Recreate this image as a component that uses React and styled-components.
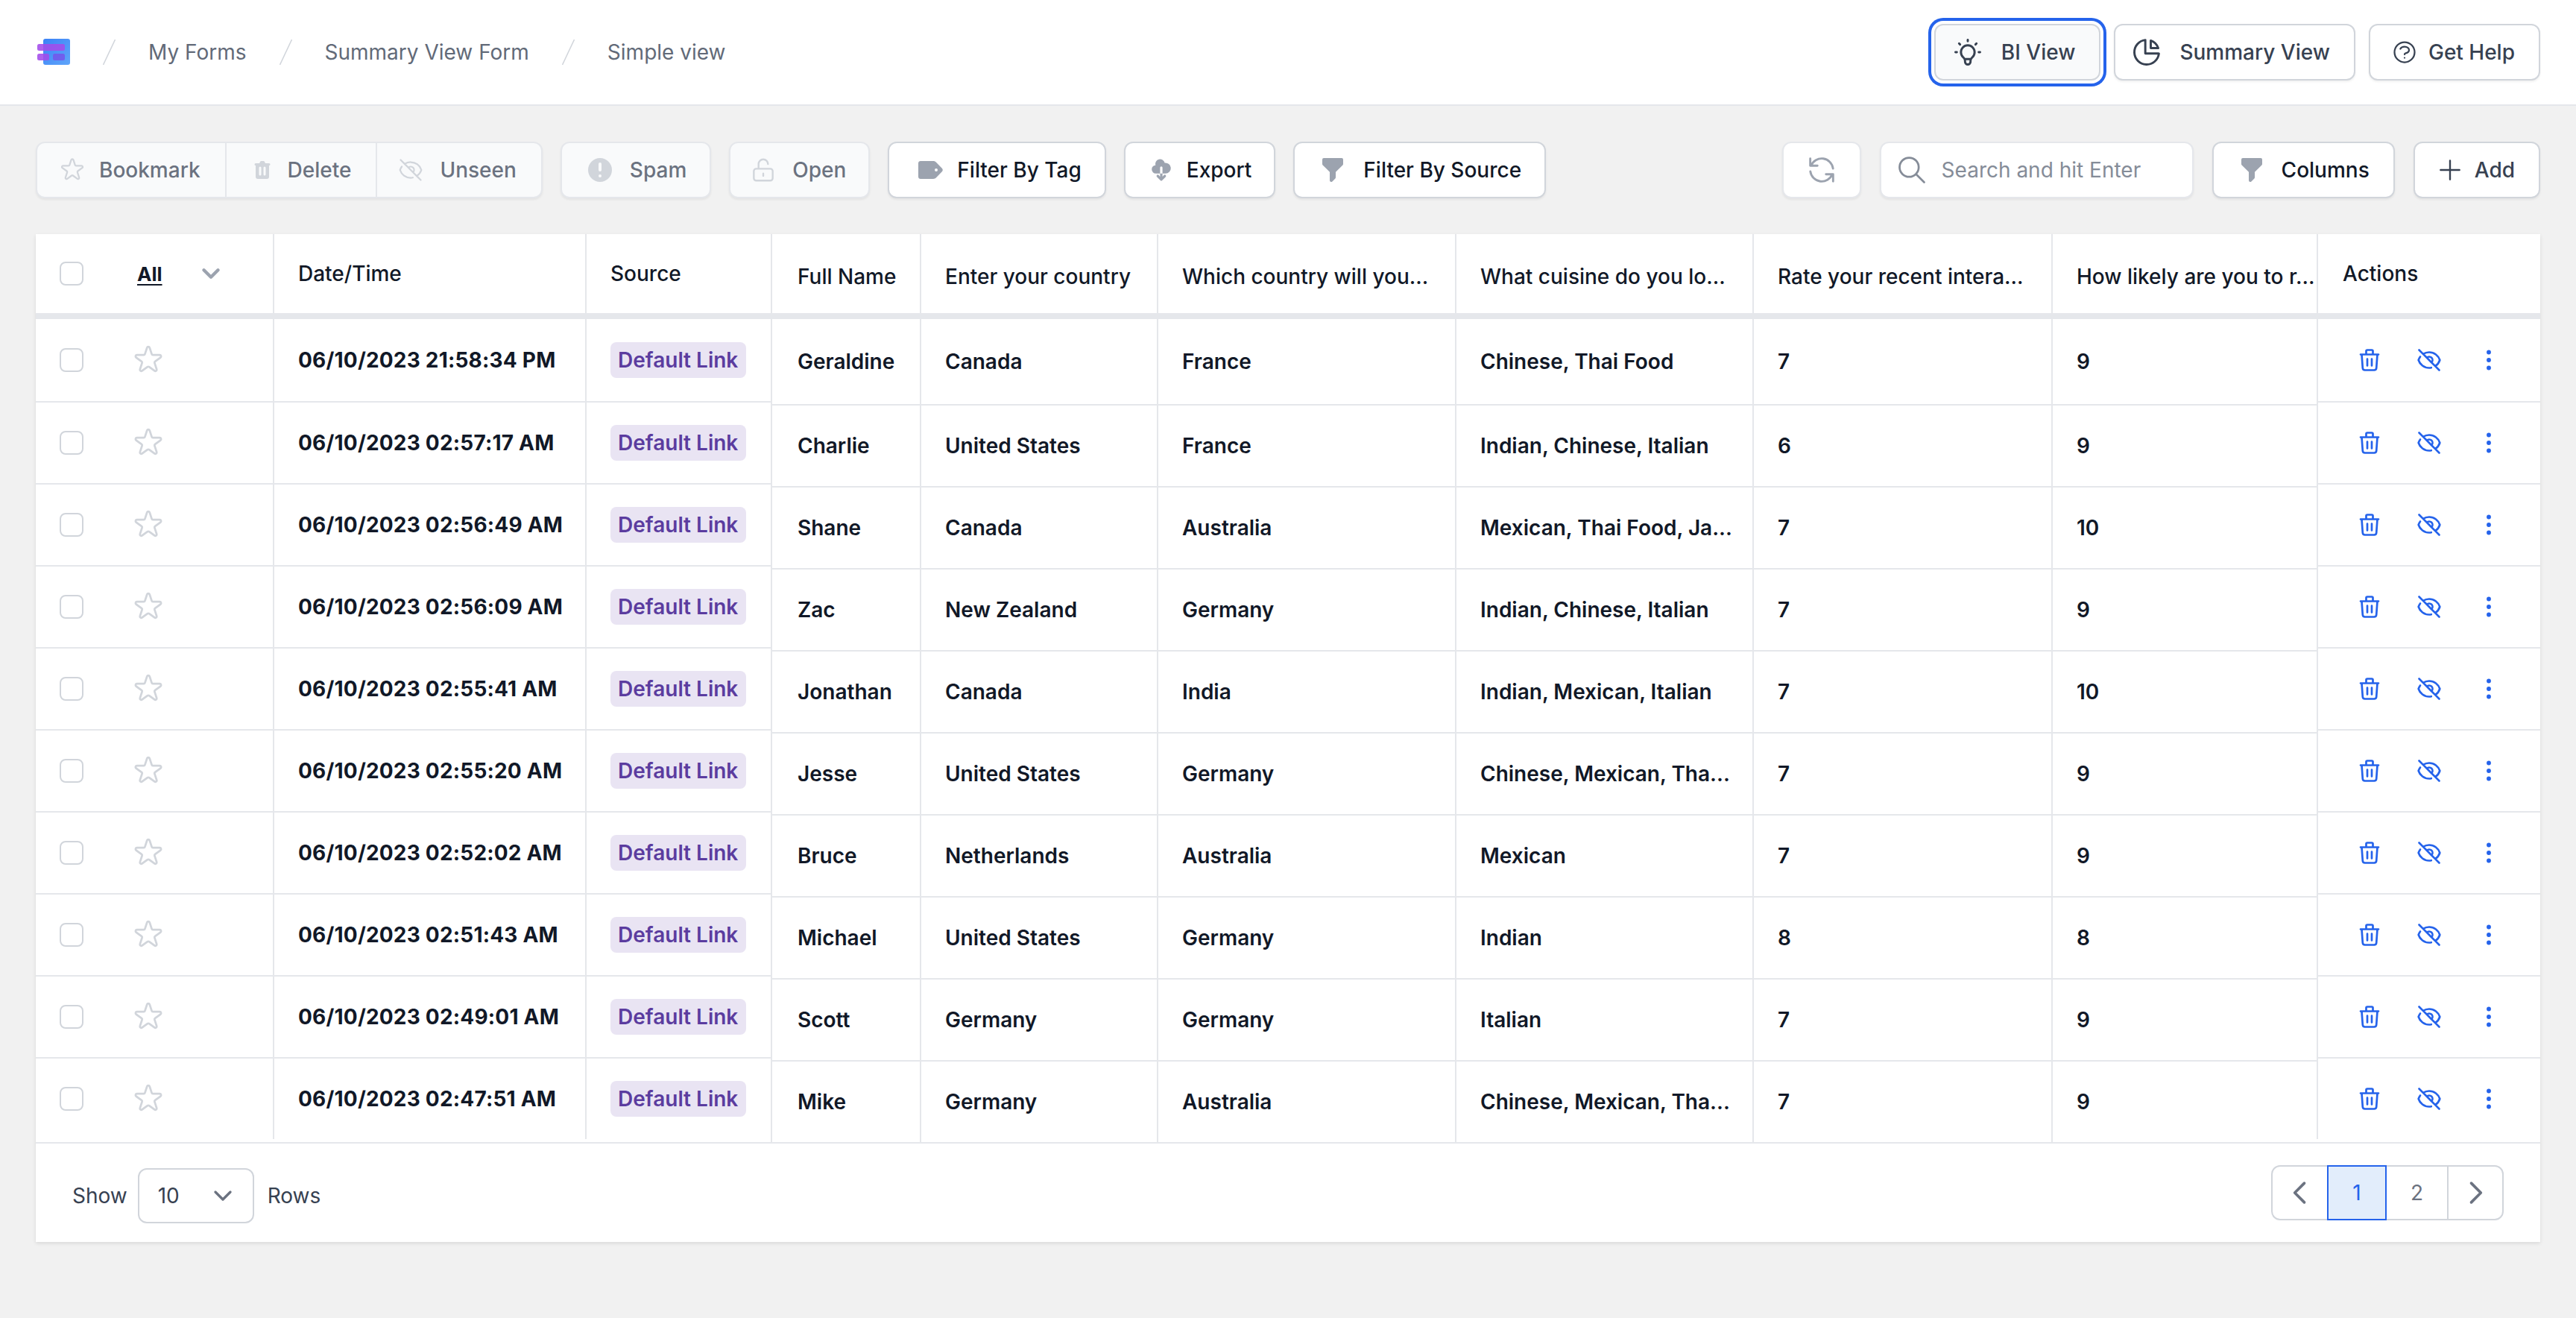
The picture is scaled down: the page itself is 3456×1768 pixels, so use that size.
import React from "react";
import styled, { createGlobalStyle } from "styled-components";
import {
  HiOutlineStar, HiTrash, HiOutlineEyeOff, HiExclamationCircle, HiOutlineLockOpen,
  HiCloudDownload, HiFilter, HiOutlineRefresh, HiOutlineSearch, HiOutlinePlus,
  HiOutlineLightBulb, HiOutlineChartPie, HiOutlineQuestionMarkCircle, HiOutlineTrash,
  HiOutlineDotsVertical, HiOutlineChevronLeft, HiOutlineChevronRight,
} from "react-icons/hi";
import { ChevronDown } from "lucide-react";

const Global = createGlobalStyle`
  html, body { margin: 0; padding: 0; background: #f1f1f1; }
  body { font-family: Inter, "Liberation Sans", sans-serif; min-height: 1768px; color: #111827; }
  * { box-sizing: border-box; }
`;

const thin = (Icon, w = 1.5) => styled(Icon)`
  flex: none;
  & path { stroke-width: ${w}; }
`;
const Star = thin(HiOutlineStar);
const EyeOff = thin(HiOutlineEyeOff);
const RowEyeOff = thin(HiOutlineEyeOff, 1.8);
const LockOpen = thin(HiOutlineLockOpen);
const Refresh = thin(HiOutlineRefresh, 1.5);
const Search = thin(HiOutlineSearch, 1.5);
const Plus = thin(HiOutlinePlus, 1.5);
const Bulb = thin(HiOutlineLightBulb, 1.6);
const Pie = thin(HiOutlineChartPie, 1.6);
const Question = thin(HiOutlineQuestionMarkCircle, 1.5);
const OutTrash = thin(HiOutlineTrash, 1.8);
const DotsV = thin(HiOutlineDotsVertical, 1.9);

const Header = styled.header`
  height: 142px;
  background: #fff;
  border-bottom: 2px solid #e5e7eb;
  display: flex;
  align-items: center;
  justify-content: space-between;
  padding: 0 48px 0 50px;
`;
const Crumbs = styled.nav`
  display: flex;
  align-items: center;
  gap: 44px;
  font-size: 28px;
  color: #626a78;
  font-weight: 400;
`;
const Group = styled.div`
  display: flex;
  align-items: center;
  gap: ${(p) => p.$gap || 25}px;
`;
const Button = styled.button`
  height: 76px;
  display: flex;
  align-items: center;
  gap: ${(p) => p.$gap}px;
  padding: 0 ${(p) => p.$pr ?? 32}px 0 ${(p) => p.$pl}px;
  font: 500 28px Inter, sans-serif;
  white-space: nowrap;
  border-radius: 12px;
  border: 2px solid ${(p) => (p.$muted ? "#e5e7eb" : "#d1d5db")};
  background: ${(p) => (p.$muted || p.$active ? "#f9fafb" : "#fff")};
  color: ${(p) => (p.$muted ? "#6b7280" : p.$tone || "#111827")};
  box-shadow: ${(p) =>
    p.$active
      ? "0 0 0 4px #fff, 0 0 0 8px #2563eb"
      : "0 2px 3px rgba(0,0,0,.06)"};
`;
const IconTint = styled.span`
  display: flex;
  color: ${(p) => p.$c};
`;
const Toolbar = styled.div`
  margin-top: 48px;
  padding: 0 48px;
  display: flex;
  justify-content: space-between;
  align-items: center;
`;
const Segmented = styled.div`
  display: flex;
  height: 76px;
  border: 2px solid #e5e7eb;
  border-radius: 12px;
  background: #f9fafb;
  box-shadow: 0 2px 3px rgba(0,0,0,.06);
`;
const Segment = styled.div`
  display: flex;
  align-items: center;
  gap: ${(p) => p.$gap}px;
  padding: 0 ${(p) => p.$pr}px 0 ${(p) => p.$pl}px;
  font: 500 28px Inter, sans-serif;
  color: #6b7280;
  & + & { border-left: 2px solid #e5e7eb; }
`;
const IconButton = styled.button`
  width: 106px;
  height: 76px;
  display: flex;
  align-items: center;
  justify-content: center;
  background: #fff;
  color: #9ca3af;
  border: 2px solid #e5e7eb;
  border-radius: 12px;
  box-shadow: 0 2px 3px rgba(0,0,0,.06);
`;
const SearchBox = styled.div`
  width: 421px;
  height: 76px;
  display: flex;
  align-items: center;
  gap: 18px;
  padding-left: 19px;
  background: #fff;
  border: 2px solid #e5e7eb;
  border-radius: 12px;
  box-shadow: 0 2px 3px rgba(0,0,0,.06);
  font: 400 28px Inter, sans-serif;
  color: #858c98;
`;
const Card = styled.section`
  margin: 48px 48px 0;
  background: #fff;
  box-shadow: 0 2px 5px rgba(0,0,0,.1);
`;
const Panes = styled.div`
  display: flex;
  align-items: flex-start;
`;
const Pane = styled.div`
  flex: none;
  width: ${(p) => p.$w}px;
`;
const Row = styled.div`
  display: grid;
  grid-template-columns: ${(p) => p.$cols};
  height: ${(p) => p.$h}px;
  border-bottom: ${(p) => (p.$last ? "none" : "2px solid #e5e7eb")};
`;
const HeadRow = styled(Row)`
  border-bottom: 8px solid #e5e7eb;
  font-weight: 500;
`;
const Cell = styled.div`
  display: flex;
  align-items: center;
  min-width: 0;
  white-space: nowrap;
  font-size: 28px;
  font-weight: ${(p) => p.$weight || 600};
  color: #111827;
  padding-left: ${(p) => p.$pl ?? 32}px;
  padding-top: ${(p) => p.$pt || 0}px;
  border-left: ${(p) => (p.$noLine ? "none" : "2px solid #e5e7eb")};
`;
const DateCell = styled(Cell)`
  font-weight: 700;
  letter-spacing: 0.2px;
`;
const SelectCell = styled(Cell)`
  padding-left: 32px;
`;
const Checkbox = styled.span`
  width: 32px;
  height: 32px;
  flex: none;
  border: 2px solid #d1d5db;
  border-radius: 8px;
  background: #fff;
`;
const StarSlot = styled.span`
  display: flex;
  margin-left: 65px;
  color: #d1d5db;
`;
const AllLink = styled.span`
  margin-left: 72px;
  font-size: 26px;
  font-weight: 700;
  text-decoration: underline;
  text-underline-offset: 4px;
`;
const AllChevron = styled.span`
  display: flex;
  margin-left: 46px;
  color: #9ca3af;
`;
const Badge = styled.span`
  height: 48px;
  display: flex;
  align-items: center;
  padding: 0 11px 0 10px;
  border-radius: 8px;
  background: #e9e4f3;
  color: #5b3c9f;
  font-weight: 600;
  font-size: 28px;
`;
const Actions = styled(Cell)`
  gap: 44px;
  padding-left: 51px;
  color: #2563eb;
`;
const Footer = styled.footer`
  height: 134px;
  border-top: 2px solid #e5e7eb;
  display: flex;
  align-items: center;
  justify-content: space-between;
  padding: 0 49px;
`;
const ShowRows = styled.div`
  display: flex;
  align-items: center;
  gap: 18px;
  padding-top: 8px;
  font-size: 28px;
  color: #374151;
`;
const Select = styled.div`
  width: 156px;
  height: 74px;
  margin-left: -4px;
  display: flex;
  align-items: center;
  justify-content: space-between;
  padding: 0 20px 0 25px;
  border: 2px solid #d1d5db;
  border-radius: 12px;
  color: #374151;
  & svg { color: #6b7280; }
`;
const Pager = styled.div`
  display: flex;
  height: 74px;
  border: 2px solid #d1d5db;
  border-radius: 12px;
  font-size: 28px;
  color: #6b7280;
`;
const PageItem = styled.div`
  width: ${(p) => p.$w}px;
  display: flex;
  align-items: center;
  justify-content: center;
  ${(p) => p.$line && "border-left: 2px solid #d1d5db;"}
  ${(p) =>
    p.$current &&
    "margin: -2px 0; background: #e2edfb; border: 2px solid #2563eb; color: #2563eb;"}
`;

const TagIcon = () => (
  <svg width="33" height="24" viewBox="0 0 33 24" fill="#9ca3af">
    <path d="M3 0h17c1.6 0 3 .6 4 1.7l8 8.3c1 1.2 1 2.8 0 4l-8 8.3c-1 1.1-2.400 1.700-4 1.700H3c-1.700 0-3-1.300-3-3V3c0-1.700 1.300-3 3-3zm21 10a2 2 0 1 0 0 4 2 2 0 0 0 0-4z" fillRule="evenodd" />
  </svg>
);
const Logo = () => (
  <svg width="44" height="36" viewBox="0 0 44 36">
    <defs>
      <linearGradient id="lg" x1="0" y1="0" x2="1" y2="1">
        <stop offset="0" stopColor="#3b82f6" />
        <stop offset="1" stopColor="#60a5fa" />
      </linearGradient>
    </defs>
    <rect x="8" y="0" width="36" height="35" rx="3" fill="url(#lg)" />
    <rect x="0" y="7" width="37" height="9" rx="2.500" fill="#a34bea" fillOpacity=".88" />
    <rect x="0" y="20" width="16" height="9" rx="2.500" fill="#a34bea" fillOpacity=".88" />
    <rect x="21" y="20" width="16" height="9" rx="2.500" fill="#7a4be8" fillOpacity=".75" />
  </svg>
);
const Slash = () => (
  <svg width="17" height="34" viewBox="0 0 17 34">
    <line x1="16.500" y1="0" x2="0.500" y2="34" stroke="#d1d5db" strokeWidth="1.500" />
  </svg>
);

const leftCols = "318px 419px 249px";
const midCols = "200px 318px 400px 399px 401px 356px";
const rows = [
  ["06/10/2023 21:58:34 PM", "Geraldine", "Canada", "France", "Chinese, Thai Food", "7", "9"],
  ["06/10/2023 02:57:17 AM", "Charlie", "United States", "France", "Indian, Chinese, Italian", "6", "9"],
  ["06/10/2023 02:56:49 AM", "Shane", "Canada", "Australia", "Mexican, Thai Food, Ja...", "7", "10"],
  ["06/10/2023 02:56:09 AM", "Zac", "New Zealand", "Germany", "Indian, Chinese, Italian", "7", "9"],
  ["06/10/2023 02:55:41 AM", "Jonathan", "Canada", "India", "Indian, Mexican, Italian", "7", "10"],
  ["06/10/2023 02:55:20 AM", "Jesse", "United States", "Germany", "Chinese, Mexican, Tha...", "7", "9"],
  ["06/10/2023 02:52:02 AM", "Bruce", "Netherlands", "Australia", "Mexican", "7", "9"],
  ["06/10/2023 02:51:43 AM", "Michael", "United States", "Germany", "Indian", "8", "8"],
  ["06/10/2023 02:49:01 AM", "Scott", "Germany", "Germany", "Italian", "7", "9"],
  ["06/10/2023 02:47:51 AM", "Mike", "Germany", "Australia", "Chinese, Mexican, Tha...", "7", "9"],
];
const heads = [
  "Full Name", "Enter your country", "Which country will you...", "What cuisine do you lo...",
  "Rate your recent intera...", "How likely are you to r...",
];
const sideHeight = (i) => (i === 0 ? 112 : i === 9 ? 108 : 110);
const midHeight = (i) => (i === 0 ? 116 : i === 9 ? 108 : 110);

export default function App() {
  return (
    <>
      <Global />
      <Header>
        <Crumbs>
          <Logo />
          <Slash />
          <span>My Forms</span>
          <Slash />
          <span>Summary View Form</span>
          <Slash />
          <span>Simple view</span>
        </Crumbs>
        <Group $gap={18}>
          <Button $active $pl={21} $gap={23} $tone="#374151"><Bulb size={44} />BI View</Button>
          <Button $pl={20} $gap={22} $tone="#374151"><Pie size={44} />Summary View</Button>
          <Button $pl={28} $gap={14} $tone="#374151"><Question size={36} />Get Help</Button>
        </Group>
      </Header>

      <Toolbar>
        <Group $gap={24}>
          <Segmented>
            <Segment $pl={29} $gap={18} $pr={33}><IconTint $c="#d1d5db"><Star size={36} /></IconTint>Bookmark</Segment>
            <Segment $pl={33} $gap={19} $pr={33}><IconTint $c="#d1d5db"><HiTrash size={30} /></IconTint>Delete</Segment>
            <Segment $pl={27} $gap={21} $pr={33}><IconTint $c="#d1d5db"><EyeOff size={36} /></IconTint>Unseen</Segment>
          </Segmented>
          <Button $muted $pl={31} $gap={20} $pr={31}><IconTint $c="#d1d5db"><HiExclamationCircle size={40} /></IconTint>Spam</Button>
          <Button $muted $pl={25} $gap={20} $pr={30}><IconTint $c="#d1d5db"><LockOpen size={38} /></IconTint>Open</Button>
          <Button $pl={39} $gap={19} $pr={31}><TagIcon />Filter By Tag</Button>
          <Button $pl={32} $gap={18} $pr={30}><IconTint $c="#9ca3af"><HiCloudDownload size={32} /></IconTint>Export</Button>
          <Button $pl={31} $gap={21} $pr={31}><IconTint $c="#9ca3af"><HiFilter size={40} /></IconTint>Filter By Source</Button>
        </Group>
        <Group $gap={25}>
          <IconButton><Refresh size={46} /></IconButton>
          <SearchBox><Search size={44} />Search and hit Enter</SearchBox>
          <Button $pl={31} $gap={20}><IconTint $c="#9ca3af"><HiFilter size={40} /></IconTint>Columns</Button>
          <Button $pl={28} $gap={14} $tone="#374151"><Plus size={38} />Add</Button>
        </Group>
      </Toolbar>

      <Card>
        <Panes>
          <Pane $w={986}>
            <HeadRow $cols={leftCols} $h={114}>
              <SelectCell $weight={500} $noLine>
                <Checkbox />
                <AllLink>All</AllLink>
                <AllChevron><ChevronDown size={38} strokeWidth={2.8} /></AllChevron>
              </SelectCell>
              <Cell $weight={500}>Date/Time</Cell>
              <Cell $weight={500}>Source</Cell>
            </HeadRow>
            {rows.map((r, i) => (
              <Row key={r[0]} $cols={leftCols} $h={sideHeight(i)} $last={i === 9}>
                <SelectCell $noLine>
                  <Checkbox />
                  <StarSlot><Star size={44} /></StarSlot>
                </SelectCell>
                <DateCell>{r[0]}</DateCell>
                <Cell><Badge>Default Link</Badge></Cell>
              </Row>
            ))}
          </Pane>
          <Pane $w={2074}>
            <HeadRow $cols={midCols} $h={114}>
              {heads.map((h, i) => (
                <Cell key={h} $weight={500} $pt={8} $pl={i === 0 ? 34 : 32}>{h}</Cell>
              ))}
            </HeadRow>
            {rows.map((r, i) => (
              <Row key={r[0]} $cols={midCols} $h={midHeight(i)} $last={i === 9}>
                {r.slice(1).map((v, j) => (
                  <Cell key={j} $pl={j === 0 ? 34 : 32}>{v}</Cell>
                ))}
              </Row>
            ))}
          </Pane>
          <Pane $w={300}>
            <HeadRow $cols="300px" $h={114}>
              <Cell $weight={500} $pl={33}>Actions</Cell>
            </HeadRow>
            {rows.map((r, i) => (
              <Row key={r[0]} $cols="300px" $h={sideHeight(i)} $last={i === 9}>
                <Actions>
                  <OutTrash size={36} />
                  <RowEyeOff size={36} />
                  <DotsV size={36} />
                </Actions>
              </Row>
            ))}
          </Pane>
        </Panes>
        <Footer>
          <ShowRows>
            <span>Show</span>
            <Select>10<ChevronDown size={40} /></Select>
            <span>Rows</span>
          </ShowRows>
          <Pager>
            <PageItem $w={73}><HiOutlineChevronLeft size={44} /></PageItem>
            <PageItem $w={80} $current>1</PageItem>
            <PageItem $w={81}>2</PageItem>
            <PageItem $w={74} $line><HiOutlineChevronRight size={44} /></PageItem>
          </Pager>
        </Footer>
      </Card>
    </>
  );
}
